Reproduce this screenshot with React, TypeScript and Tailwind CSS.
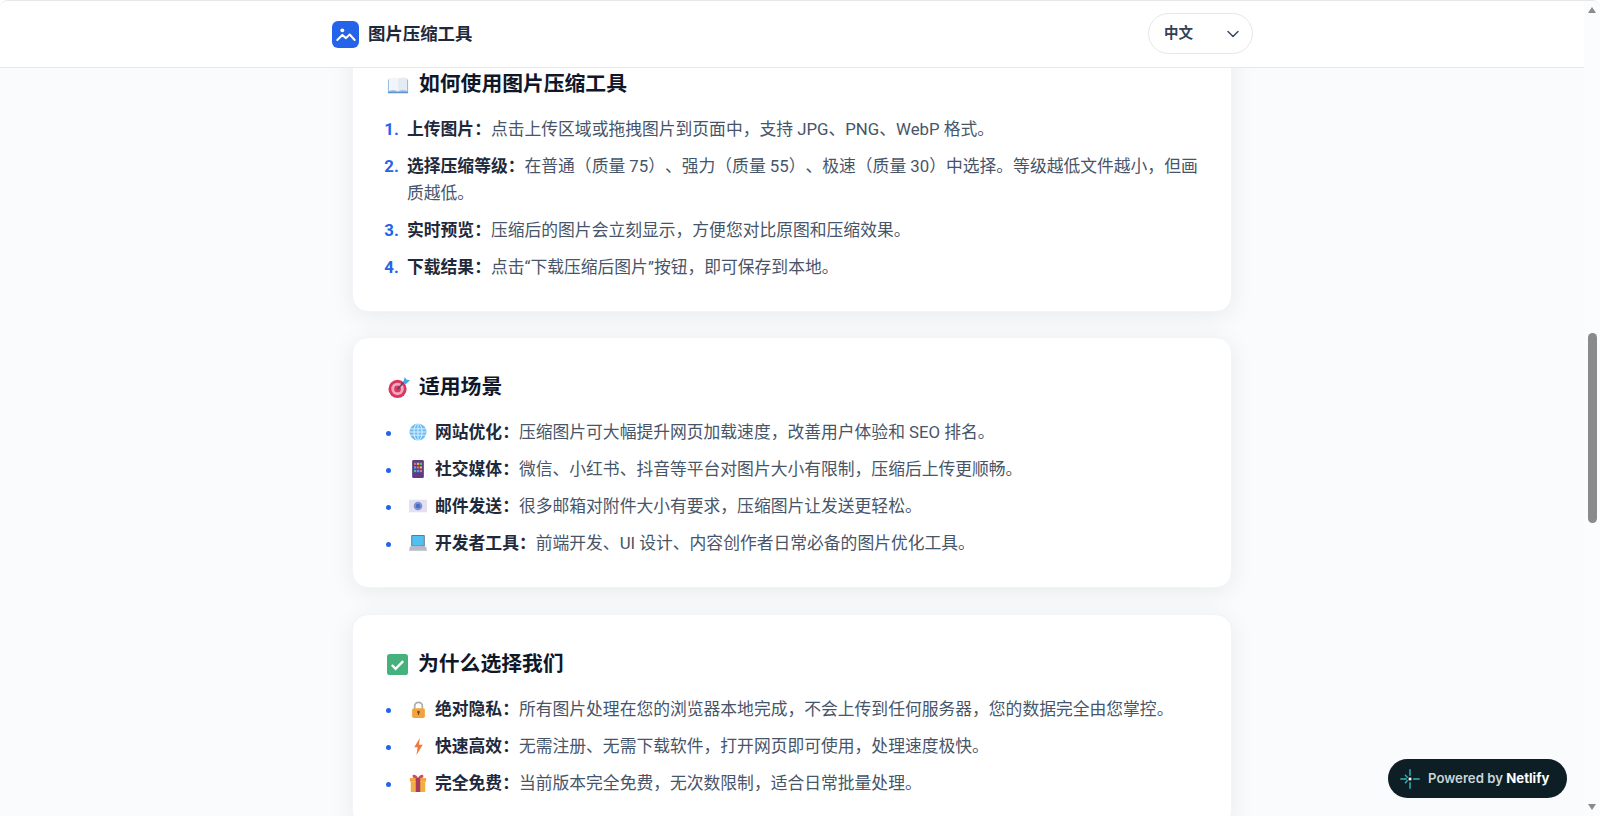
import { ChevronDown } from "lucide-react";
import type { ReactNode } from "react";

const cjk = "font-['Roboto','Noto_Sans_CJK_SC',sans-serif] [text-spacing-trim:space-all]";

function Book() {
  return (
    <svg viewBox="0 0 24 24" className="inline-block w-[22px] h-[22px] align-[-5px]">
      <path d="M1 6h22v14H1z" fill="#8fb4dc" />
      <path d="M2 4.500c3-1 7-1 10 .5v14c-3-1.500-7-1.500-10-.5z" fill="#f2f5f9" />
      <path d="M22 4.500c-3-1-7-1-10 .5v14c3-1.500 7-1.500 10-.5z" fill="#e4ebf3" />
      <path d="M1 19.500h22v1.500H1z" fill="#5d93d1" />
    </svg>
  );
}

function Target() {
  return (
    <svg viewBox="0 0 24 24" className="mr-[-1px] inline-block w-[23px] h-[23px] align-[-5px]">
      <circle cx="11" cy="13.500" r="9.500" fill="#d9375f" />
      <circle cx="11" cy="13.500" r="6.500" fill="#f3a9bd" />
      <circle cx="11" cy="13.500" r="3.500" fill="#d9375f" />
      <path d="M11 13.500 19 5" stroke="#3b4a6b" strokeWidth="1.400" />
      <path d="M17 7l1.500-6 2 3 3.500.5-4.500 4z" fill="#3fa9e6" />
    </svg>
  );
}

function Globe() {
  return (
    <svg viewBox="0 0 20 20" className="inline-block w-[18px] h-[18px] align-[-3px]">
      <circle cx="10" cy="10" r="9.500" fill="#6cbcf5" />
      <g fill="none" stroke="#e6f4fe" strokeWidth="1">
        <ellipse cx="10" cy="10" rx="4.500" ry="9.500" />
        <path d="M10 .5v19M1 6.500h18M1 13.500h18M.5 10h19" />
      </g>
    </svg>
  );
}

function Phone() {
  return (
    <svg viewBox="0 0 20 20" className="inline-block w-[18px] h-[18px] align-[-3px]">
      <rect x="3.500" y="0" width="13" height="20" rx="1.500" fill="#5b3c85" />
      <rect x="5.500" y="3" width="2.500" height="2.500" fill="#f25f5c" />
      <rect x="8.800" y="3" width="2.500" height="2.500" fill="#f2b632" />
      <rect x="12" y="3" width="2.500" height="2.500" fill="#4cc38a" />
      <rect x="5.500" y="7" width="2.500" height="2.500" fill="#4aa8f0" />
      <rect x="8.800" y="7" width="2.500" height="2.500" fill="#f25f5c" />
      <rect x="12" y="7" width="2.500" height="2.500" fill="#f2b632" />
      <rect x="5.500" y="11" width="2.500" height="2.500" fill="#4cc38a" />
      <rect x="8.800" y="11" width="2.500" height="2.500" fill="#4aa8f0" />
      <rect x="12" y="11" width="2.500" height="2.500" fill="#e66fb0" />
    </svg>
  );
}

function Mail() {
  return (
    <svg viewBox="0 0 20 20" className="inline-block w-[18px] h-[18px] align-[-3px]">
      <rect x="0" y="3" width="20" height="14" fill="#e4e0f0" />
      <circle cx="10" cy="10" r="4.800" fill="#7c93d6" />
      <circle cx="10" cy="10" r="2.500" fill="#4a6cc4" />
    </svg>
  );
}

function Laptop() {
  return (
    <svg viewBox="0 0 20 20" className="inline-block w-[18px] h-[18px] align-[-3px]">
      <rect x="2.500" y="1" width="15" height="13" rx="1" fill="#5b6b80" />
      <rect x="3.500" y="2" width="13" height="11" fill="#4fc0f0" />
      <path d="M1 14h18l1 4.500H0z" fill="#b6bbc8" />
    </svg>
  );
}

function Check() {
  return (
    <svg viewBox="0 0 22 22" className="inline-block w-[21px] h-[21px] align-[-4px]">
      <rect x="0" y="0" width="22" height="22" rx="3" fill="#45b27d" />
      <path d="M5 11.500l4 4 8-8" fill="none" stroke="#fff" strokeWidth="2.400" />
    </svg>
  );
}

function Lock() {
  return (
    <svg viewBox="0 0 20 20" className="inline-block w-[17px] h-[17px] align-[-3px]">
      <path d="M5.500 9V6a4.500 4.500 0 0 1 9 0v3" fill="none" stroke="#a9adb5" strokeWidth="2" />
      <rect x="2.500" y="8.500" width="15" height="11.500" rx="2" fill="#f2a33c" />
      <circle cx="10" cy="13" r="1.600" fill="#7a4a1a" />
      <path d="M9.300 13h1.400v3.500H9.300z" fill="#7a4a1a" />
    </svg>
  );
}

function Bolt() {
  return (
    <svg viewBox="0 0 20 20" className="inline-block w-[17px] h-[17px] align-[-3px]">
      <path d="M11.500 0 5 11h4l-1.500 9L15 8h-4.500z" fill="#f0793a" />
    </svg>
  );
}

function Gift() {
  return (
    <svg viewBox="0 0 20 20" className="inline-block w-[18px] h-[18px] align-[-3px]">
      <rect x="1" y="4.500" width="18" height="4" fill="#f2a33c" />
      <rect x="2" y="8.500" width="16" height="11.500" fill="#f0b040" />
      <rect x="7.500" y="4.500" width="5" height="15.500" fill="#a63d5e" />
      <path d="M10 4.500C8 .5 4 0 4 2.500s3 2 6 2zM10 4.500c2-4 6-4.500 6-2s-3 2-6 2z" fill="#d8475a" />
    </svg>
  );
}

function Item({ icon, title, text }: { icon?: ReactNode; title: string; text: string }) {
  return (
    <li className="mb-2.5 pl-1 text-[16.8px] leading-[27px] text-[#475569] last:mb-0">
      {icon && <span className="ml-[1px] mr-[7px] inline-block w-[20px] text-center">{icon}</span>}
      <strong className="font-bold text-[#1e293b]">{title}：</strong>
      {text}
    </li>
  );
}

const steps = [
  { title: "上传图片", text: "点击上传区域或拖拽图片到页面中，支持 JPG、PNG、WebP 格式。" },
  { title: "选择压缩等级", text: "在普通（质量 75）、强力（质量 55）、极速（质量 30）中选择。等级越低文件越小，但画质越低。" },
  { title: "实时预览", text: "压缩后的图片会立刻显示，方便您对比原图和压缩效果。" },
  { title: "下载结果", text: "点击“下载压缩后图片”按钮，即可保存到本地。" },
];

const scenes = [
  { icon: <Globe />, title: "网站优化", text: "压缩图片可大幅提升网页加载速度，改善用户体验和 SEO 排名。" },
  { icon: <Phone />, title: "社交媒体", text: "微信、小红书、抖音等平台对图片大小有限制，压缩后上传更顺畅。" },
  { icon: <Mail />, title: "邮件发送", text: "很多邮箱对附件大小有要求，压缩图片让发送更轻松。" },
  { icon: <Laptop />, title: "开发者工具", text: "前端开发、UI 设计、内容创作者日常必备的图片优化工具。" },
];

const reasons = [
  { icon: <Lock />, title: "绝对隐私", text: "所有图片处理在您的浏览器本地完成，不会上传到任何服务器，您的数据完全由您掌控。" },
  { icon: <Bolt />, title: "快速高效", text: "无需注册、无需下载软件，打开网页即可使用，处理速度极快。" },
  { icon: <Gift />, title: "完全免费", text: "当前版本完全免费，无次数限制，适合日常批量处理。" },
];

function Card({ icon, title, children }: { icon: ReactNode; title: string; children: ReactNode }) {
  return (
    <section className="mb-[26px] rounded-2xl border border-[#f1f5f9] bg-white px-8 pt-[34px] pb-[30px] shadow-[0_4px_24px_rgba(15,23,42,0.07)] first:mb-[25px]">
      <h2 className="mb-[17px] pl-[2px] text-[20.8px] font-bold leading-[30px] text-[#0f172a]">
        <span className="mr-[10px]">{icon}</span>
        {title}
      </h2>
      {children}
    </section>
  );
}

export default function App() {
  return (
    <div className={`relative flex h-screen w-full overflow-hidden rounded-t-[8px] border-t border-[#e5e7eb] bg-[#f9fbfc] ${cjk}`}>
      <div className="flex min-w-0 flex-1 flex-col">
        {/* top bar */}
        <header className="relative z-10 h-[67px] shrink-0 border-b border-[#e5e7eb] bg-white">
          <div className="mx-auto flex h-full w-[920px] items-center justify-between">
            <div className="flex items-center gap-[9px]">
              <span className="flex h-[27px] w-[27px] items-center justify-center rounded-[6px] bg-[#2563eb]">
                <svg viewBox="0 0 24 24" className="h-[22px] w-[22px]">
                  <circle cx="8" cy="8" r="2.100" fill="#fff" />
                  <path d="M2.500 18.500 8 13l4 3.500 4-4 5.500 6" fill="none" stroke="#fff" strokeWidth="2.200" strokeLinecap="round" strokeLinejoin="round" />
                </svg>
              </span>
              <span className="text-[17.4px] font-bold text-[#1e293b]">图片压缩工具</span>
            </div>
            <div className="-mr-[1px] mb-[1px] flex h-[41px] w-[105px] items-center justify-between rounded-full border border-[#e5e7eb] bg-white pl-[15px] pr-[9px]">
              <span className="text-[14.5px] font-semibold text-[#334155]">中文</span>
              <ChevronDown size={20} strokeWidth={1.6} className="text-[#334155]" />
            </div>
          </div>
        </header>

        {/* scrolled content */}
        <main className="min-h-0 flex-1 overflow-hidden">
          <div className="mx-auto -mt-[34px] w-[880px]">
            <Card icon={<Book />} title="如何使用图片压缩工具">
              <ol className="list-decimal pl-[18px] marker:font-bold marker:text-[#2563eb]">
                {steps.map((s) => (
                  <Item key={s.title} title={s.title} text={s.text} />
                ))}
              </ol>
            </Card>
            <Card icon={<Target />} title="适用场景">
              <ul className="list-disc pl-[18px] marker:text-[#2563eb]">
                {scenes.map((s) => (
                  <Item key={s.title} icon={s.icon} title={s.title} text={s.text} />
                ))}
              </ul>
            </Card>
            <Card icon={<Check />} title="为什么选择我们">
              <ul className="list-disc pl-[18px] marker:text-[#2563eb]">
                {reasons.map((s) => (
                  <Item key={s.title} icon={s.icon} title={s.title} text={s.text} />
                ))}
              </ul>
            </Card>
          </div>
        </main>
      </div>

      {/* scrollbar */}
      <div className="flex w-4 shrink-0 flex-col items-center bg-[#fbfcfd] pt-[6px] pb-[6px]">
        <span className="h-0 w-0 border-x-[4px] border-b-[6px] border-x-transparent border-b-[#8a8a8a]" />
        <span className="mt-[320px] h-[190px] w-[9px] rounded-full bg-[#8a8a8a]" />
        <span className="mt-auto h-0 w-0 border-x-[4px] border-t-[6px] border-x-transparent border-t-[#8a8a8a]" />
      </div>

      {/* netlify badge */}
      <div className="absolute bottom-[18px] right-[33px] z-20 flex h-[39px] w-[179px] items-center rounded-full bg-[#0e1e25] pl-[11px] font-['Inter',sans-serif] text-[13.200px] text-[#c9d5da]">
        <svg viewBox="0 0 24 24" className="mr-[7px] h-[22px] w-[22px]">
          <g stroke="#2fb8b8" strokeWidth="1.600" strokeLinecap="round">
            <path d="M12 2v6M12 16v6M2 12h6M16 12h6M7 8l2 2M7 16l2-2" />
          </g>
          <rect x="10.500" y="10.500" width="3" height="3" fill="#fff" />
        </svg>
        <span className="font-semibold">
          Powered by <b className="font-bold text-white">Netlify</b>
        </span>
      </div>
    </div>
  );
}
